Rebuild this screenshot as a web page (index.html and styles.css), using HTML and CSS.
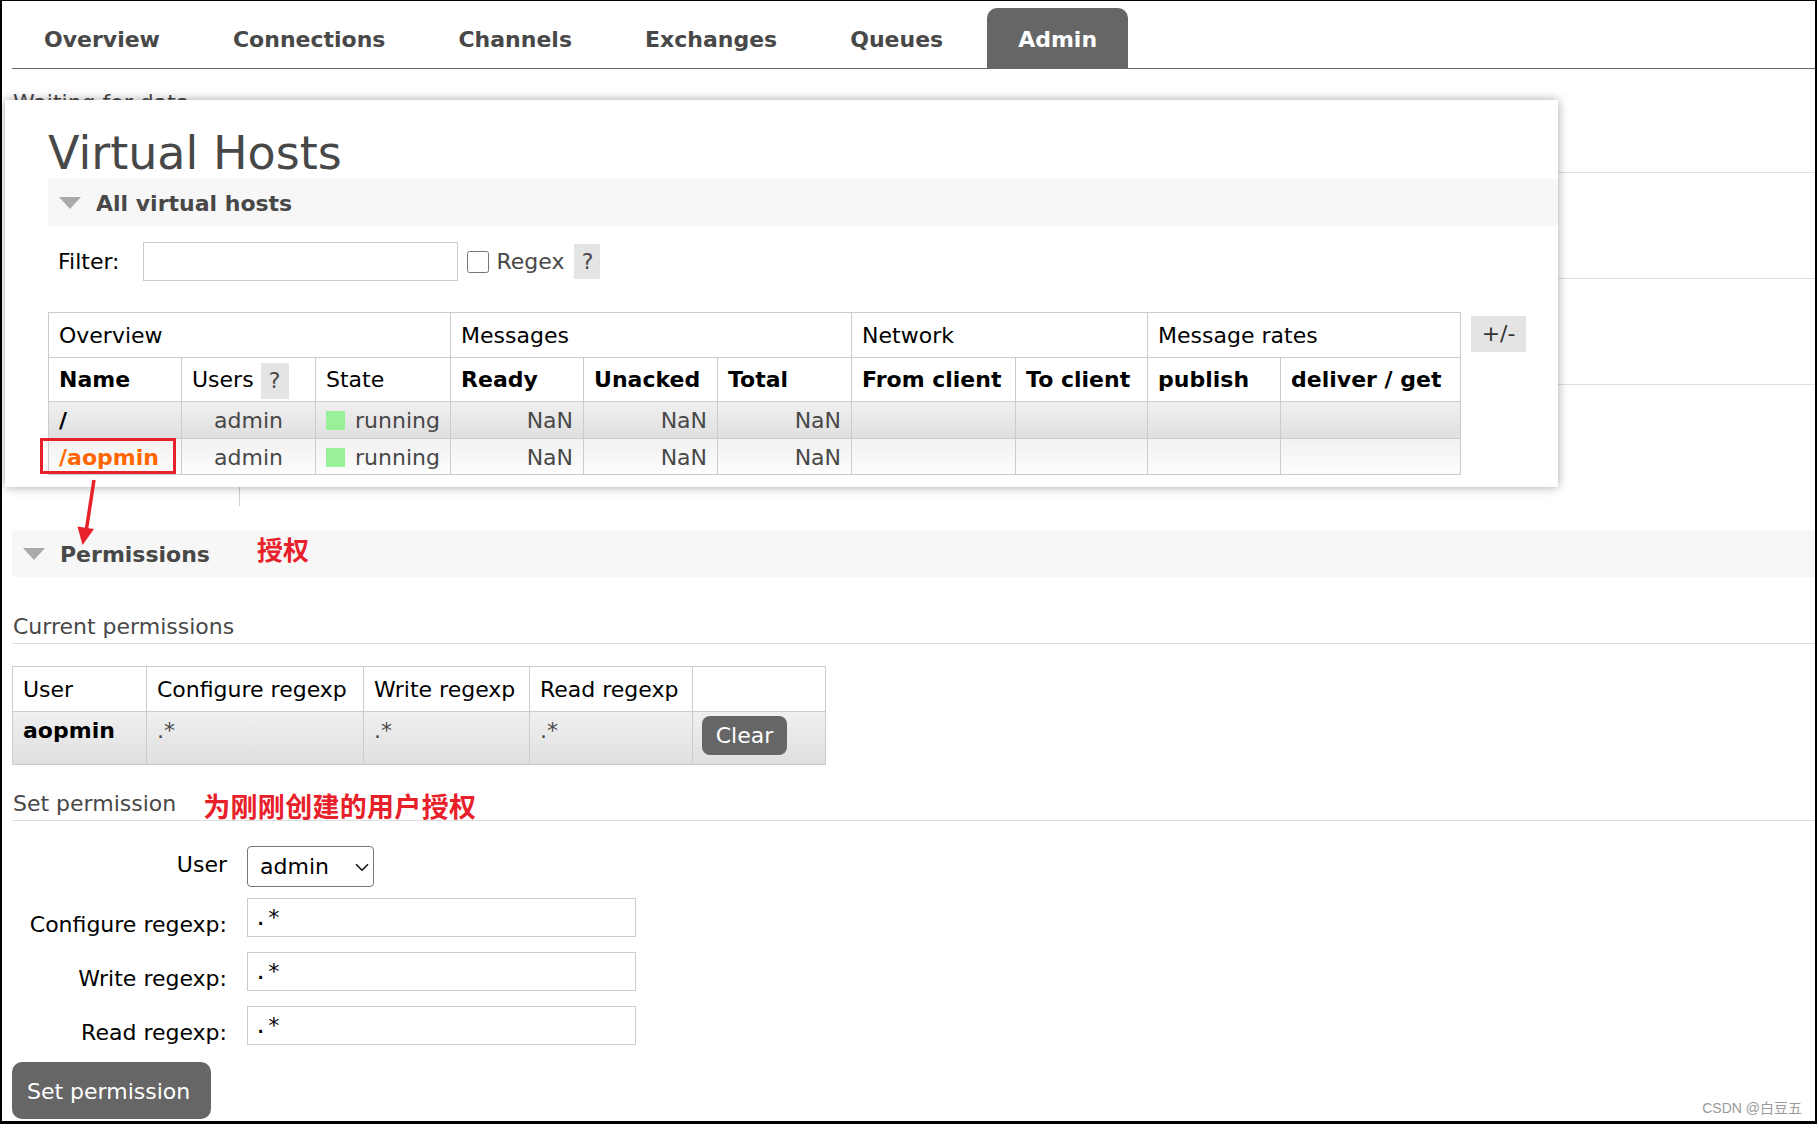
FILE: index.html
```html
<!DOCTYPE html>
<html lang="en">
<head>
<meta charset="utf-8">
<title>RabbitMQ Management - Admin</title>
<link rel="stylesheet" href="styles.css">
</head>
<body>
<div class="page">
  <nav class="tabs">
    <ul>
      <li><a>Overview</a></li>
      <li><a>Connections</a></li>
      <li><a>Channels</a></li>
      <li><a>Exchanges</a></li>
      <li><a>Queues</a></li>
      <li class="active"><a>Admin</a></li>
    </ul>
  </nav>

  <p class="waiting">Waiting for data...</p>
  <div class="under">
    <div class="under-row r1"></div>
    <div class="under-row r2"></div>
    <div class="under-row r3"></div>
    <div class="under-tail"><span class="vline"></span></div>
  </div>

  <div class="section-head perm-head">
    <span class="tri"></span>
    <span class="sh-title">Permissions</span>
    <span class="anno anno-1">授权</span>
  </div>

  <h3 class="sub sub-current">Current permissions</h3>
  <table class="list perms">
    <colgroup>
      <col class="pw1"><col class="pw2"><col class="pw3"><col class="pw4"><col class="pw5">
    </colgroup>
    <thead>
      <tr class="group"><th>User</th><th>Configure regexp</th><th>Write regexp</th><th>Read regexp</th><th></th></tr>
    </thead>
    <tbody>
      <tr class="alt1">
        <td class="b dark">aopmin</td>
        <td>.*</td>
        <td>.*</td>
        <td>.*</td>
        <td class="btn-cell"><button class="btn btn-clear">Clear</button></td>
      </tr>
    </tbody>
  </table>

  <h3 class="sub sub-set"><span>Set permission</span><span class="anno anno-2">为刚刚创建的用户授权</span></h3>

  <div class="form">
    <div class="form-row row-user">
      <label>User</label>
      <div class="control select-wrap">
        <select><option>admin</option></select>
        <svg class="chev" viewBox="0 0 14 9" width="14" height="9"><path d="M1 1.2 L7 7.2 L13 1.2" fill="none" stroke="#111" stroke-width="1.6"/></svg>
      </div>
    </div>
    <div class="form-row row-first">
      <label>Configure regexp:</label>
      <div class="control"><input type="text" value=".*"></div>
    </div>
    <div class="form-row row-next">
      <label>Write regexp:</label>
      <div class="control"><input type="text" value=".*"></div>
    </div>
    <div class="form-row row-next">
      <label>Read regexp:</label>
      <div class="control"><input type="text" value=".*"></div>
    </div>
  </div>
  <button class="btn btn-set">Set permission</button>
</div>

<div class="popup">
  <h1>Virtual Hosts</h1>
  <div class="section-head">
    <span class="tri"></span>
    <span class="sh-title">All virtual hosts</span>
  </div>
  <div class="filter">
    <label>Filter:</label>
    <input type="text" class="filter-input">
    <input type="checkbox" class="regex-check">
    <span class="regex">Regex</span>
    <span class="help help-filter">?</span>
  </div>
  <div class="table-wrap">
    <table class="list vhosts">
      <colgroup>
        <col class="w133"><col class="w134"><col class="w135"><col class="w133"><col class="w134b"><col class="w134c"><col class="w164"><col class="w132"><col class="w133b"><col class="w180">
      </colgroup>
      <thead>
        <tr class="group">
          <th colspan="3">Overview</th>
          <th colspan="3">Messages</th>
          <th colspan="2">Network</th>
          <th colspan="2">Message rates</th>
        </tr>
        <tr class="cols">
          <th class="b">Name</th>
          <th>Users <span class="help help-th">?</span></th>
          <th>State</th>
          <th class="b">Ready</th>
          <th class="b">Unacked</th>
          <th class="b">Total</th>
          <th class="b">From client</th>
          <th class="b">To client</th>
          <th class="b">publish</th>
          <th class="b">deliver / get</th>
        </tr>
      </thead>
      <tbody>
        <tr class="alt1 row1">
          <td class="b dark">/</td>
          <td class="c">admin</td>
          <td><span class="state-box"></span>running</td>
          <td class="r">NaN</td>
          <td class="r">NaN</td>
          <td class="r">NaN</td>
          <td></td><td></td><td></td><td></td>
        </tr>
        <tr class="alt2 row2">
          <td class="b link">/aopmin</td>
          <td class="c">admin</td>
          <td><span class="state-box"></span>running</td>
          <td class="r">NaN</td>
          <td class="r">NaN</td>
          <td class="r">NaN</td>
          <td></td><td></td><td></td><td></td>
        </tr>
      </tbody>
    </table>
    <span class="help help-toggle">+/-</span>
  </div>
</div>

<div class="mark-box"></div>
<svg class="mark-arrow" width="40" height="80" viewBox="60 470 40 80">
  <line x1="92" y1="479" x2="84.5" y2="528" stroke="#e8202a" stroke-width="3.5"/>
  <polygon points="80.5,544 75.5,525.5 92,528" fill="#e8202a"/>
</svg>
<div class="watermark">CSDN @白豆五</div>
</body>
</html>
```

FILE: styles.css
```css
* { box-sizing: border-box; }

html { margin: 0; }

body {
  margin: 0;
  width: 1817px;
  height: 1124px;
  border-style: solid;
  border-color: #000;
  border-width: 1px 2px 3px 2px;
  position: relative;
  overflow: hidden;
  background: #fff;
  font-family: "DejaVu Sans", "Noto Sans CJK SC", sans-serif;
  font-size: 22px;
  line-height: 26px;
  color: #484848;
}

.page { padding-left: 10px; }

/* ---------- tabs ---------- */
.tabs {
  padding-top: 7px;
  border-bottom: 1px solid #666;
}
.tabs ul {
  list-style: none;
  margin: 0;
  padding: 0 0 0 3px;
  display: flex;
}
.tabs li { margin-right: 15px; }
.tabs a {
  display: block;
  height: 60px;
  padding: 4px 29px 0;
  line-height: 56px;
  font-weight: bold;
  color: #484848;
  text-decoration: none;
  border-radius: 10px 10px 0 0;
}
.tabs li.active a { background: #666; color: #fff; padding: 4px 31px 0; }

/* ---------- page underneath the popup ---------- */
.waiting { margin: 21px 0 0 1px; }
.under-row { border-bottom: 1px solid #e0e0e0; }
.r1 { height: 57px; }
.r2 { height: 106px; }
.r3 { height: 106px; }
.under-tail { height: 121px; padding-left: 227px; }
.vline { display: block; width: 1px; height: 100%; background: #d0d0d0; }

/* ---------- section headers ---------- */
.section-head {
  height: 47px;
  background: #f7f7f7;
  display: flex;
  align-items: center;
  padding: 3px 0 0 11px;
}
.perm-head { margin-top: 24px; }
.tri {
  width: 0;
  height: 0;
  border-left: 11px solid transparent;
  border-right: 11px solid transparent;
  border-top: 12px solid #aaa;
  margin: -3px 15px 0 0;
}
.sh-title { font-weight: bold; color: #484848; }

.anno {
  color: #e8202a;
  font-family: "Noto Sans CJK SC", sans-serif;
  font-weight: 700;
}
.anno-1 {
  font-size: 26px;
  line-height: 26px;
  margin-left: 47px;
  align-self: flex-start;
  margin-top: 3px;
}
.anno-2 {
  font-size: 27px;
  line-height: 27px;
  margin-left: 27px;
  margin-top: 1px;
  letter-spacing: 0.3px;
}

/* ---------- sub headings ---------- */
h3.sub {
  display: flex;
  align-items: flex-start;
  height: 30px;
  margin: 0;
  padding: 0 0 3px 1px;
  font-size: 22px;
  font-weight: normal;
  line-height: 26px;
  color: #484848;
  border-bottom: 1px solid #ddd;
}
.sub-current { margin-top: 37px !important; }
.sub-set { margin-top: 26px !important; }

/* ---------- tables ---------- */
table.list {
  border-collapse: collapse;
  table-layout: fixed;
}
table.list th,
table.list td {
  border: 1px solid #ccc;
  text-align: left;
  white-space: nowrap;
  overflow: hidden;
  vertical-align: top;
}
table.list tr.group { height: 45px; }
table.list tr.group th {
  font-weight: normal;
  color: #000;
  padding: 10px 10px 0;
}
table.list tr.cols { height: 44px; }
table.list tr.cols th {
  font-weight: normal;
  color: #000;
  padding: 9px 10px 0;
}
table.list tr.cols th.b,
table.list td.b { font-weight: bold; }
table.list td {
  padding: 6px 10px 0;
  color: #484848;
}
table.list tr.row1 { height: 37px; }
table.list tr.row2 { height: 36px; }
table.list td.c { text-align: center; }
table.list td.r { text-align: right; }
table.list td.dark { color: #000; }
table.list td.link { color: #f60; }

tr.alt1 { background: linear-gradient(#f0f0f0, #dfdfdf); }
tr.alt2 { background: linear-gradient(#f1f1f1, #fdfdfd); }

.vhosts { width: 1412px; }
.w133 { width: 133px; }
.w134 { width: 134px; }
.w135 { width: 135px; }
.w134b { width: 134px; }
.w134c { width: 134px; }
.w164 { width: 164px; }
.w132 { width: 132px; }
.w133b { width: 133px; }
.w180 { width: 180px; }

.perms { width: 813px; margin-top: 22px; }
.pw1 { width: 134px; }
.pw2 { width: 217px; }
.pw3 { width: 166px; }
.pw4 { width: 163px; }
.pw5 { width: 133px; }
.perms tr.alt1 { height: 53px; }
.perms td { padding: 5px 10px 0; }
.perms td.btn-cell { padding: 4px 10px 0 9px; }

.state-box {
  display: inline-block;
  width: 19px;
  height: 19px;
  background: #98f098;
  margin-right: 10px;
  vertical-align: -2px;
}

.help {
  display: inline-block;
  background: #e4e4e4;
  color: #484848;
  text-align: center;
}
.help-th {
  width: 28px;
  height: 36px;
  line-height: 36px;
  margin: -5px 0;
  vertical-align: middle;
}

/* ---------- buttons ---------- */
.btn {
  background: #666;
  color: #fff;
  border: 0;
  font: inherit;
  cursor: pointer;
}
.btn-clear {
  display: block;
  width: 85px;
  height: 39px;
  line-height: 39px;
  padding: 0;
  border-radius: 8px;
}
.btn-set {
  display: block;
  margin-top: 16px;
  width: 199px;
  height: 57px;
  padding: 2px 15px 0;
  text-align: left;
  border-radius: 10px;
}

/* ---------- form ---------- */
.form-row { display: flex; align-items: flex-start; }
.form-row label {
  width: 215px;
  text-align: right;
  color: #000;
}
.control { margin-left: 20px; }
.row-user { margin-top: 25px; }
.row-user label { padding-top: 6px; }
.row-first { margin-top: 11px; }
.row-next { margin-top: 14px; }
.row-first label,
.row-next label { padding-top: 14px; }

.select-wrap { position: relative; }
.select-wrap select {
  appearance: none;
  -webkit-appearance: none;
  width: 127px;
  height: 41px;
  padding: 0 0 0 12px;
  border: 1px solid #767676;
  border-radius: 4px;
  background: #fff;
  font-family: "DejaVu Sans", sans-serif;
  font-size: 22px;
  color: #000;
}
.chev {
  position: absolute;
  right: 5px;
  top: 17px;
  pointer-events: none;
}
.form input[type=text] {
  width: 389px;
  height: 39px;
  padding: 0 6px;
  border: 1px solid #ccc;
  font-family: "DejaVu Sans Mono", monospace;
  font-size: 22px;
  color: #000;
}

/* ---------- popup ---------- */
.popup {
  position: absolute;
  left: 3px;
  top: 99px;
  width: 1553px;
  height: 387px;
  padding: 30px 0 0 43px;
  background: #fff;
  box-shadow: 0 0 10px rgba(0, 0, 0, 0.35);
  z-index: 2;
}
.popup h1 {
  margin: 0;
  font-size: 46px;
  line-height: 46px;
  font-weight: normal;
  color: #484848;
}
.popup .section-head { margin-top: 3px; }

.filter {
  display: flex;
  align-items: center;
  margin-top: 16px;
  padding-left: 10px;
}
.filter label { color: #000; }
.filter-input {
  margin-left: 23px;
  width: 315px;
  height: 39px;
  border: 1px solid #ccc;
}
.regex-check {
  margin: 0 0 0 9px;
  width: 22px;
  height: 22px;
}
.regex { margin-left: 8px; color: #484848; }
.help-filter {
  margin-left: 10px;
  width: 26px;
  height: 35px;
  line-height: 35px;
}

.table-wrap {
  display: flex;
  align-items: flex-start;
  gap: 10px;
  margin-top: 31px;
}
.help-toggle {
  margin-top: 4px;
  width: 55px;
  height: 36px;
  line-height: 36px;
  color: #333;
}

/* ---------- annotations (drawn over the page) ---------- */
.mark-box {
  position: absolute;
  left: 38px;
  top: 437px;
  width: 136px;
  height: 36px;
  border: 3px solid #e8202a;
  z-index: 3;
}
.mark-arrow {
  position: absolute;
  left: 60px;
  top: 470px;
  z-index: 3;
}
.watermark {
  position: absolute;
  right: 13px;
  top: 1099px;
  font-family: "Liberation Sans", "Noto Sans CJK SC", sans-serif;
  font-size: 14px;
  line-height: 16px;
  color: #9a9a9a;
}
```
